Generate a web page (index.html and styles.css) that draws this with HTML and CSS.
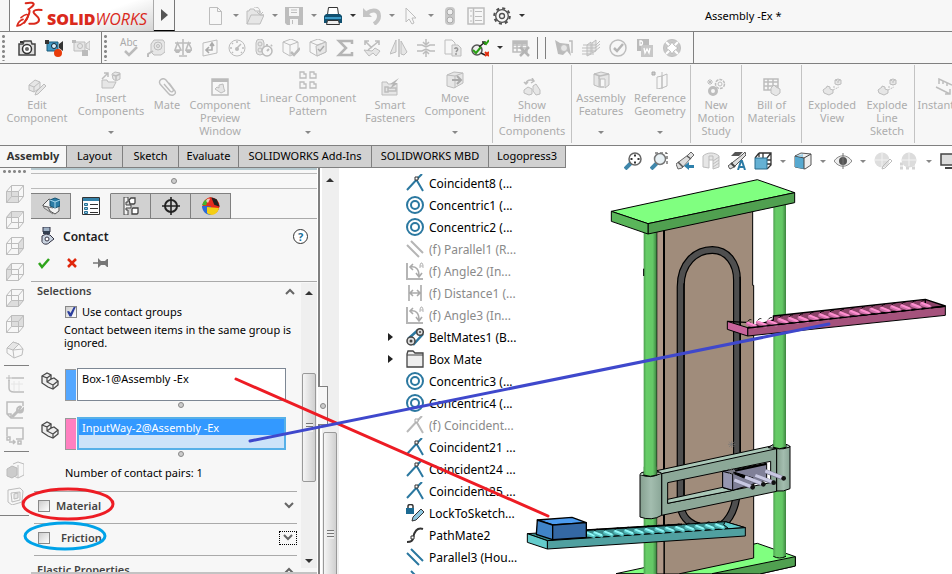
FILE: index.html
```html
<!DOCTYPE html>
<html lang="en">
<head>
<meta charset="utf-8">
<title>Assembly -Ex *</title>
<link rel="stylesheet" href="styles.css">
</head>
<body>
<svg class="defs" aria-hidden="true">
  <symbol id="cube" viewBox="0 0 18 18"><path class="l" d="M.5 6.500h12v11h-12zM.5 6.500l5-6h12v11l-5 6M12.500 6.500l5-6M5.500.5v11h12M5.500 11.500l-5 6"/></symbol>
  <symbol id="part" viewBox="0 0 18 18"><path d="M1 4l5-3 4 2v4l3-1 4 3v4l-5 4-5-2-6-4z" fill="#eee" stroke="#4a4a4a" stroke-width="1.300"/><path d="M1 4l5 2v4l6 3v4M6 6l4-3M6 10l4-3M12 13l5-4" fill="none" stroke="#4a4a4a" stroke-width="1.200"/></symbol>
  <symbol id="coin" viewBox="0 0 18 18"><path d="M1 16L13 3l3-3M10 5l7 12" fill="none" stroke="currentColor" stroke-width="2"/><path d="M9 3h3v3H9z" fill="#fff" stroke="#333"/></symbol>
  <symbol id="coinoff" viewBox="0 0 18 18"><path d="M1 16L13 3l3-3M10 5l7 12" fill="none" stroke="#b9b9b9" stroke-width="2"/><path d="M9 3h3v3H9z" fill="#fff" stroke="#aaa"/></symbol>
  <symbol id="conc" viewBox="0 0 18 18"><circle cx="9" cy="9" r="8" fill="none" stroke="#2b78a0" stroke-width="2"/><circle cx="9" cy="9" r="4" fill="#fff" stroke="#2b78a0" stroke-width="2"/></symbol>
  <symbol id="para" viewBox="0 0 18 18"><path d="M1 5l12 12M5 1l12 12" fill="none" stroke="currentColor" stroke-width="2"/></symbol>
  <symbol id="angle" viewBox="0 0 18 18"><path d="M1 1v16h16" fill="none" stroke="#b5b5b5" stroke-width="2"/><path d="M4 5c6-1 9 2 9 9M7 2L4 5l3 3M10 11l3 4 3-4" fill="none" stroke="#aaa" stroke-width="1.600"/><path d="M14 6V3l1-2h1l1 2v3M14 4h3" fill="none" stroke="#b5b5b5"/></symbol>
  <symbol id="chev" viewBox="0 0 12 8"><path d="M2 1l4 4 4-4" fill="none" stroke="#666" stroke-width="2"/></symbol>
  <symbol id="explode" viewBox="0 0 20 18"><path class="f" d="M1 12l4-3V8l3 1v2l3 1v3l-4 2-5-2zM13 2l3-1 3 1v4l-3 1-3-1z"/><path class="l" d="M13 2l3 1 3-1M16 3v4M12 8v3M11 12l6-3" stroke-dasharray="2 1"/></symbol>
</svg>

<header class="quickbar">
  <div class="logo">
    <svg width="28" height="29" viewBox="0 0 84 87" aria-hidden="true"><g fill="none" stroke="#da291c" stroke-width="6" stroke-linecap="round" stroke-linejoin="round"><path d="M32 7c14-4 26-2 24 4-2 6-8 9-16 14 8 1 2 20-12 40"/><path d="M18 50c14-12 22-12 21-4C37 58 22 72 6 75c3-10 10-18 18-20" stroke-width="5"/><path d="M80 27c-15-3-26 1-24 8 1 5 15 11 16 20 1 12-15 15-29 13"/></g></svg>
    <span class="logo-a">SOLID</span><span class="logo-b">WORKS</span>
  </div>
  <button class="logo-more" aria-label="Expand menu"></button>
  <div class="qa">
    <button class="ib" aria-label="New"><svg class="i" viewBox="0 0 18 18"><path class="l" fill="#fff" d="M2.500.5h8l4 4v13h-12zM10.500.5v4h4"/></svg></button><i class="caret"></i>
    <button class="ib" aria-label="Open"><svg class="i" viewBox="0 0 18 18"><path class="f" d="M1 17V4h2l1-2h4l1 2h5v4h4l-4 9z"/><path class="l" d="M1 17l4-9h13M8 0c5 0 6 2 6 6M11 5l3 3 3-3"/></svg></button><i class="caret"></i>
    <button class="ib" aria-label="Save"><svg class="i" viewBox="0 0 18 18"><path fill="#bdbdbd" d="M0 0h18v18H2l-2-2z"/><path fill="#f4f4f4" d="M4 1h10v8H4zM5 12h8v6H5z"/><path class="l" d="M6 3h6M6 5.500h6M7.500 13v4"/></svg></button><i class="caret"></i>
    <button class="ib" aria-label="Print"><svg class="i" viewBox="0 0 18 18"><path fill="#fff" stroke="#333" d="M4.500.5h9l1 7h-11z"/><path fill="#11506f" d="M2 7h14l2 2v7H0V9z"/><path fill="#3c9ac6" d="M1 10h16v2H1z"/><path fill="#eee" stroke="#333" d="M3.500 13.500h11l1 4h-13z"/></svg></button><i class="caret dark"></i>
    <button class="ib" aria-label="Undo"><svg class="i" viewBox="0 0 18 18"><path d="M4 6c7-5 12-2 12 3 0 4-2 6-5 8" fill="none" stroke="#c4c4c4" stroke-width="4"/><path fill="#c4c4c4" d="M0 1v9h9z"/></svg></button><i class="caret"></i>
    <button class="ib" aria-label="Select"><svg class="i" viewBox="0 0 18 18"><path class="l" fill="#fff" d="M4 1v14l3-3 3 5 2-1-2-5h4z"/></svg></button><i class="caret"></i>
    <button class="ib" aria-label="Rebuild"><svg class="i" viewBox="0 0 18 18"><rect x="4" y="0" width="10" height="18" rx="4" fill="#c8c8c8"/><circle cx="9" cy="5" r="3" fill="#eee" stroke="#aaa"/><circle cx="9" cy="13" r="3" fill="#eee" stroke="#aaa"/></svg></button>
    <button class="ib gap" aria-label="File properties"><svg class="i" viewBox="0 0 18 18"><path class="l" stroke-width="1.500" d="M1 1h16v16H1zM6.500 1v16"/><path class="l" d="M3 4h2M3 9h2M3 14h2M8 4.500h7M8 9.500h7M8 13.500h7"/></svg></button>
    <button class="ib gap" aria-label="Options"><svg class="i" viewBox="0 0 18 18"><g fill="none" stroke="#505050"><circle cx="9" cy="9" r="7.800" stroke-width="2" stroke-dasharray="3.060 3.060"/><circle cx="9" cy="9" r="6.300" stroke-width="1.300"/><circle cx="9" cy="9" r="2.500" stroke-width="1.300"/></g></svg></button><i class="caret dark"></i>
  </div>
  <h1 class="doc-title">Assembly -Ex *</h1>
</header>

<div class="toolbar" role="toolbar">
  <div class="tb-group rec">
    <i class="grip"></i>
    <button class="tb" aria-label="Capture"><svg class="i" viewBox="0 0 18 18"><path d="M1 5h4l1-3h7l1 3h3v11H1z" fill="#ddd" stroke="#444" stroke-width="1.500"/><circle cx="9" cy="10" r="4.500" fill="#fff" stroke="#333" stroke-width="1.500"/><circle cx="9" cy="10" r="2" fill="#666"/><path d="M2 3h3" stroke="#333" stroke-width="2"/></svg></button>
    <button class="tb" aria-label="Record"><svg class="i" viewBox="0 0 18 18"><path d="M2 3h11v9H2z" fill="#3f97c2" stroke="#1b5a7b"/><path d="M0 1h4v4H0zM14 5l4-3v10l-4-3z" fill="#333"/><circle cx="9" cy="7" r="2.500" fill="#d7eefa" stroke="#123"/><circle cx="13" cy="14" r="4" fill="#e83c0b"/></svg></button>
    <button class="tb" aria-label="Stop"><svg class="i" viewBox="0 0 18 18"><path class="f" d="M2 3h11v9H2zM14 5l4-3v9l-4-2z"/><circle class="l" cx="8" cy="7" r="2.500"/><path fill="#bbb" d="M0 1h4v3H0zM10 11h6v6h-6z"/></svg></button>
  </div>
  <div class="tb-group main-tools">
    <i class="grip"></i>
    <button class="tb" aria-label="Spelling"><span class="abc">Abc</span><svg class="i" viewBox="0 0 18 18"><path d="M5 12l4 4 8-8" fill="none" stroke="#bbb" stroke-width="2.500"/></svg></button>
    <button class="tb" aria-label="Measure"><svg class="i" viewBox="0 0 18 18"><path class="f" d="M4 5l3-4h9l2 3v9l-4 3H7l-3-3z"/><circle class="l" cx="11" cy="7" r="4"/><circle class="l" cx="11" cy="7" r="1.500"/><path class="l" stroke-width="2" d="M6 12l-5 3v3"/></svg></button>
    <button class="tb" aria-label="Mass"><svg class="i" viewBox="0 0 18 18"><path class="l" stroke-width="1.600" d="M9 0v16M1 4h16M5 17h8M3.500 4L1 11h6zM14.500 4L12 11h6z"/><path fill="#bbb" d="M0 11h7l-2 3H2zM11 11h7l-2 3h-3z"/></svg></button>
    <button class="tb" aria-label="Section"><svg class="i" viewBox="0 0 18 18"><path class="l" d="M2 4l14-3v13L2 17z"/><path d="M11 5v6H6M8 8l-3 3 3 3M9 7l2-3 2 3" fill="none" stroke="#aaa" stroke-width="1.600"/></svg></button>
    <button class="tb" aria-label="Sensor"><svg class="i" viewBox="0 0 18 18"><circle class="l" cx="9" cy="9" r="8"/><path class="l" stroke-width="1.500" d="M9 9l4-4M9 2v2M2 9h2M14 9h2M4 4l1 1M4 14l1-1M14 14l-1-1"/><circle cx="9" cy="10" r="2" fill="#bbb"/></svg></button>
    <button class="tb" aria-label="Performance"><svg class="i" viewBox="0 0 18 18"><rect class="f" x="1" y="0" width="8" height="16" rx="4"/><circle class="l" cx="5" cy="5" r="2"/><circle class="l" cx="5" cy="11" r="2"/><circle cx="12" cy="12" r="5" fill="#f7f7f7" stroke="#bbb" stroke-width="1.500"/><path class="l" stroke-width="2" d="M12 5v2M12 12l2-2M17 6l-1 1"/></svg></button>
    <button class="tb" aria-label="Check"><svg class="i" viewBox="0 0 18 18"><path class="l" d="M1 3l8-3 7 3v10l-8 4-7-4zM1 3l7 3 8-3M8 6v10"/><path d="M9 13l3 3 6-7" fill="none" stroke="#bbb" stroke-width="2.500"/></svg></button>
    <button class="tb" aria-label="Geometry check"><svg class="i" viewBox="0 0 18 18"><path class="l" d="M1 3l8-3 8 3v10l-9 4-7-4zM1 3l7 3 9-3"/><path class="f" d="M7 7l10-4v10l-9 4z"/><path d="M9 10l2 2 4-5" fill="none" stroke="#aaa" stroke-width="1.500"/></svg></button>
    <button class="tb" aria-label="Equations"><svg class="i" viewBox="0 0 18 18"><path d="M16 5V2H3l7 7-7 7h13v-3" fill="none" stroke="#b5b5b5" stroke-width="2.500"/></svg></button>
    <button class="tb" aria-label="Deviation"><svg class="i" viewBox="0 0 18 18"><path class="l" stroke-width="1.600" d="M2 2l7 7M16 2L5 11M2 6V2h4M12 2h4v4"/><path class="f" d="M1 11l5 6 4-3 3 3 4-5-5-3-3 3z"/></svg></button>
    <button class="tb" aria-label="Draft"><svg class="i" viewBox="0 0 18 18"><path class="f" d="M0 15L6 1v12zM11 2l6 11-3 3-3-1z"/><path class="l" d="M9 0v18" stroke-width="1.500"/></svg></button>
    <button class="tb" aria-label="Thickness"><svg class="i" viewBox="0 0 18 18"><path class="l" stroke-width="1.500" d="M9 0v5M6 3l3 3 3-3M9 18v-5M6 15l3-3 3 3M0 6h5l4 2 4-2h5M0 12h5l4-2 4 2h5"/></svg></button>
    <button class="tb" aria-label="Compare"><svg class="i" viewBox="0 0 18 18"><path class="l" d="M1 1h7l3 3v11H1z"/><path class="f" d="M8 6h6l3 3v8H8z"/><path d="M10.500 10c1-2 4-1 3 1l-1.500 2M12 14v2" fill="none" stroke="#999" stroke-width="1.500"/></svg></button>
    <button class="tb" aria-label="Active check"><svg class="i" viewBox="0 0 18 18"><circle cx="6" cy="11" r="5" fill="#eee" stroke="#555" stroke-width="1.500"/><path d="M8 8l6-5M10 14l4 2M14 6V3h-3" fill="none" stroke="#222" stroke-width="1.500"/><path d="M2 11l3 3 5-6M13 3l2 2 3-4" fill="none" stroke="#28a012" stroke-width="2"/><path d="M14 13l4 4M18 13l-4 4" stroke="#e02b0c" stroke-width="2"/></svg></button>
    <i class="caret dark tight"></i>
    <button class="tb" aria-label="Design table"><svg class="i" viewBox="0 0 18 18"><path class="l" stroke-width="1.500" d="M1 2h14v11H1zM1 6h14M1 9h14M5 2v11M10 2v11"/><path d="M1 2h14v3H1z" fill="#bbb"/><path d="M8 8l9 9M17 8l-9 9" stroke="#b5b5b5" stroke-width="2.500"/></svg></button>
    <i class="bar"></i><i class="bar"></i>
    <button class="tb" aria-label="Simulation"><svg class="i" viewBox="0 0 18 18"><path fill="#bbb" d="M0 1l5 3 9 1 2 12-4-5-4 4-5-1z"/><circle class="f" cx="9" cy="9" r="3.500"/><path class="l" stroke-width="1.500" d="M14 2h3v12"/></svg></button>
    <button class="tb" aria-label="Flow"><svg class="i" viewBox="0 0 18 18"><path class="f" d="M5 6l4-3v12l-4 2zM10 4l4-3v11l-4 2z"/><path class="l" d="M0 9h13l5-4M0 12h13l5-4M1 6h13l4-4M0 15h12"/></svg></button>
    <button class="tb" aria-label="Validate"><svg class="i" viewBox="0 0 18 18"><circle class="l" cx="9" cy="9" r="8" stroke-width="1.500"/><path d="M5 9l3 3 6-7" fill="none" stroke="#b5b5b5" stroke-width="2.500"/></svg></button>
    <button class="tb" aria-label="DriveWorks"><svg class="i" viewBox="0 0 18 18"><path fill="#bbb" d="M1 0h12v12H1z"/><path fill="#c8c8c8" d="M5 6h12v12H5z"/><path d="M4 2v4h1c2 0 2-4 0-4zM8 9l1 5 2-4 2 4 1-5" fill="none" stroke="#fff" stroke-width="1.300"/></svg></button>
    <button class="tb" aria-label="Sustainability"><svg class="i" viewBox="0 0 18 18"><circle cx="9" cy="9" r="6.500" fill="none" stroke="#c8c8c8" stroke-width="4"/><circle class="l" cx="9" cy="9" r="8.500"/><path fill="#fff" stroke="#bbb" d="M9 3l2 3 4 3-4 3-2 3-2-3-4-3 4-3z"/><path d="M3 3l3 3M15 3l-3 3M3 15l3-3M15 15l-3-3" stroke="#fff" stroke-width="2"/></svg></button>
  </div>
</div>

<div class="ribbon">
  <button class="rb w74"><svg class="ri" viewBox="0 0 18 18"><path class="f" d="M1 7l6-5 5 2v6l-6 4-5-2z"/><path class="l" d="M1 7l5 2 6-5M6 9v5"/><path class="f" d="M16 6l2 2-8 8-3 1 1-3z"/></svg><span>Edit<br>Component</span></button>
  <button class="rb up w74"><svg class="ri" viewBox="0 0 20 18"><path class="f" d="M1 17V9h5l1 2h8l-3 6zM11 3l3-2 5 1v6l-4 2-3-2z"/><path class="l" stroke-width="1.500" d="M1 8l6-6M3 2h4v4M12 4l3 1v4M15 5l4-2"/></svg><span>Insert<br>Components</span><i class="caret"></i></button>
  <button class="rb w38"><svg class="ri" viewBox="0 0 18 18"><path class="l" stroke-width="1.400" d="M6 6l6 7c2 2 4 0 3-2L8 2C5-1 0 2 2 6l8 9c3 4 9 2 7-2L11 5"/></svg><span>Mate</span></button>
  <button class="rb w68"><svg class="ri" viewBox="0 0 18 18"><path class="l" d="M1 1h16v16H1z" stroke-width="1.500"/><path fill="#bbb" d="M1 1h16v3H1z"/><path class="f" d="M4 11l2-2 2 1V7l4-1 1 5 1 2-4 2z"/></svg><span>Component<br>Preview<br>Window</span></button>
  <button class="rb up w108"><svg class="ri" viewBox="0 0 18 18"><path class="l" stroke-width="1.300" d="M1 1h4v2h2v4H1zM11 1h4v2h2v4h-6zM1 11h4v2h2v4H1zM11 11h4v2h2v4h-6z"/></svg><span>Linear Component<br>Pattern</span><i class="caret"></i></button>
  <button class="rb w56"><svg class="ri" viewBox="0 0 18 18"><path class="f" d="M1 17V4h5l1 2h9v11z"/><path class="l" stroke-width="1.500" d="M4 9h3v5H4zM7 10h8v3H7z"/><path fill="#b5b5b5" d="M18 0L9 6h3l-3 5 8-6h-3z"/></svg><span>Smart<br>Fasteners</span></button>
  <button class="rb up w74"><svg class="ri" viewBox="0 0 18 18"><path class="f" d="M1 4l7-3 9 1v10l-9 5-7-2z"/><path class="l" d="M1 4l8 1 8-3M9 5v12"/><path d="M6 9h8M11 5l4 4-4 4" fill="none" stroke="#aaa" stroke-width="2"/></svg><span>Move<br>Component</span><i class="caret"></i></button>
  <i class="rsep"></i>
  <button class="rb w78"><svg class="ri" viewBox="0 0 18 18"><path class="l" stroke-width="1.500" d="M3 6c0-4 5-5 8-3M9 0l2 3-3 2M1 4l2 2 2-2"/><path class="f" d="M1 12l4-3 4 2v5l-3 1-5-2zM10 8l3-2 4 6v4l-4 1-3-4z"/></svg><span>Show<br>Hidden<br>Components</span></button>
  <i class="rsep"></i>
  <button class="rb up w58"><svg class="ri" viewBox="0 0 18 18"><path class="f" d="M2 3l7-2 8 2v11l-4 3V8H7v8l-5-2z"/><path class="l" stroke-width="1.500" d="M2 3l6 2 9-2M7 8V5M8 8v8h4"/></svg><span>Assembly<br>Features</span><i class="caret"></i></button>
  <button class="rb up w60"><svg class="ri" viewBox="0 0 18 18"><path class="l" d="M6 6l5-1v12l-5 1zM11 5l5-2v12l-5 2M11 1v17"/><path fill="#ccc" stroke="#aaa" d="M1 1h3v3H1z"/></svg><span>Reference<br>Geometry</span><i class="caret"></i></button>
  <i class="rsep"></i>
  <button class="rb w50"><svg class="ri" viewBox="0 0 18 18"><g class="l"><circle cx="13" cy="6" r="4.500" stroke-width="1.500" stroke-dasharray="3 1"/><circle cx="13" cy="6" r="2"/><circle cx="6" cy="13" r="3.500" stroke-width="3"/><path d="M3 1v6M0 4h6M1 2l4 4M5 2L1 6"/></g></svg><span>New<br>Motion<br>Study</span></button>
  <i class="rsep"></i>
  <button class="rb w59"><svg class="ri" viewBox="0 0 18 18"><path class="l" stroke-width="1.500" d="M1 1h14v11H1zM1 4h14M1 8h14M5 1v11M10 1v11"/><path class="f" d="M8 10l3-3 2 2 4 2v4l-4 3-5-3z"/></svg><span>Bill of<br>Materials</span></button>
  <i class="rsep"></i>
  <button class="rb w60"><svg class="ri"><use href="#explode"/></svg><span>Exploded<br>View</span></button>
  <button class="rb w50"><svg class="ri"><use href="#explode"/></svg><span>Explode<br>Line<br>Sketch</span></button>
  <i class="rsep last-sep"></i>
  <button class="rb w56"><svg class="ri" viewBox="0 0 18 18"><path class="l" stroke-width="1.500" d="M5 6V1l13 6M9 3v3M13 5v3M2 9l14 7M16 11v5h-5"/></svg><span>Instant3D</span></button>
</div>

<div class="tabrow">
  <nav class="tabs">
    <a class="tab on" href="#">Assembly</a><a class="tab t56" href="#">Layout</a><a class="tab t56" href="#">Sketch</a><a class="tab t60" href="#">Evaluate</a><a class="tab t133" href="#">SOLIDWORKS Add-Ins</a><a class="tab t117" href="#">SOLIDWORKS MBD</a><a class="tab t77" href="#">Logopress3</a>
  </nav>
  <div class="headsup">
    <button class="hb" aria-label="Zoom to fit"><svg class="i" viewBox="0 0 18 18"><path d="M1 17l7-7" stroke="#3f87ab" stroke-width="4"/><circle cx="11" cy="7" r="6" fill="#fff" stroke="#666" stroke-width="1.500"/><path d="M11 2.500v2M11 9.500v2M6.500 7h2M13.500 7h2" stroke="#333" stroke-width="2"/></svg></button>
    <button class="hb" aria-label="Zoom to area"><svg class="i" viewBox="0 0 18 18"><path d="M1 17l7-7" stroke="#3f87ab" stroke-width="4"/><path d="M5 1h12v12" fill="none" stroke="#333" stroke-dasharray="3 2"/><circle cx="10" cy="7" r="5.500" fill="#e8f1f5" stroke="#777" stroke-width="1.500"/></svg></button>
    <button class="hb" aria-label="Previous view"><svg class="i" viewBox="0 0 18 18"><path d="M0 12L12 3l3-3 3 3-3 3-9 10-4 1z" fill="#ddd" stroke="#666"/><path d="M2 10l5 5M11 4l4 3" stroke="#555" stroke-width="1.500"/><path d="M8 14l5-4v3h5v3h-5v2z" fill="#2f81ac"/></svg></button>
    <button class="hb" aria-label="Section view"><svg class="i" viewBox="0 0 18 18"><path class="f" d="M1 4c4-4 12-4 16 0v11l-6 2V8H7v8l-6-1z"/><path class="l" d="M11 9l6-4M11 12l6-4M11 15l6-4M7 8V4h4v4"/></svg></button>
    <button class="hb" aria-label="Annotation views"><svg class="i" viewBox="0 0 18 18"><path d="M3 4l4-4h8l-4 4z" fill="#555"/><path d="M0 14L14 3l3-3 1 3L6 15l-4 2z" fill="#ddd" stroke="#555"/><path d="M3 11l4 4" stroke="#444" stroke-width="2"/><path d="M10 18l3-9h1l3 9M11 15h5" fill="none" stroke="#2c7ba5" stroke-width="2"/></svg></button>
    <button class="hb" aria-label="View orientation"><svg class="i" viewBox="0 0 18 18"><path d="M5 1h12v12l-4 4M5 1L1 6M17 1l-4 5M9 1v5M17 8h-4M5 1v4M13 12h4" fill="none" stroke="#333" stroke-width="1.300"/><path d="M1 6h12v11H1z" fill="#65b1d4" stroke="#286a8b"/></svg></button><i class="caret h"></i>
    <button class="hb" aria-label="Display style"><svg class="i" viewBox="0 0 18 18"><path d="M1 4l6-3 10 1v11l-6 4-10-2z" fill="#eee" stroke="#555"/><path d="M1 4l9 2v11l-9-2z" fill="#57a9d0"/><path d="M1 4l9 2 7-4M10 6v11" fill="none" stroke="#444"/><path d="M2 4l7-2v3z" fill="#9cd0e8"/></svg></button><i class="caret h"></i>
    <button class="hb" aria-label="Hide or show"><svg class="i" viewBox="0 0 18 18"><path d="M0 9c5-7 13-7 18 0-5 7-13 7-18 0z" fill="#eee" stroke="#888"/><circle cx="9" cy="9" r="4" fill="#555"/><path d="M9 1v16" stroke="#777"/></svg></button><i class="caret h"></i>
    <button class="hb" aria-label="Edit appearance"><svg class="i" viewBox="0 0 18 18"><circle cx="8" cy="8" r="7.500" fill="#dedede"/><path d="M8 1v14M1 8h14" stroke="#f2f2f2"/><path class="l" fill="#fff" d="M16 7l2 2-7 7-3 1 1-3z"/></svg></button>
    <button class="hb" aria-label="Apply scene"><svg class="i" viewBox="0 0 18 18"><path d="M0 12h18M0 16h18" stroke="#d4d4d4" stroke-width="3" stroke-dasharray="3 3"/><circle cx="9" cy="8" r="7.500" fill="#dcdcdc"/><path d="M9 1v13M2 8h14" stroke="#f2f2f2"/></svg></button><i class="caret h"></i>
    <button class="hb" aria-label="View settings"><svg class="i" viewBox="0 0 18 18"><path d="M1 2h16v11H1z" fill="#ddd" stroke="#444" stroke-width="1.500"/><path d="M5 16h8" stroke="#444" stroke-width="2"/></svg></button>
  </div>
</div>

<main class="work">
  <aside class="strip">
    <i class="grip-h"></i>
    <button class="sb" aria-label="Front"><svg class="i" viewBox="0 0 18 18"><path fill="#ddd" d="M0 6h13v12H0z"/><use href="#cube"/></svg></button>
    <button class="sb" aria-label="Back"><svg class="i" viewBox="0 0 18 18"><path fill="#ddd" d="M0 6l5-6h12l-5 6z"/><use href="#cube"/></svg></button>
    <button class="sb" aria-label="Left"><svg class="i" viewBox="0 0 18 18"><path fill="#ddd" d="M12 6l5-6v12l-5 6z"/><use href="#cube"/></svg></button>
    <button class="sb" aria-label="Right"><svg class="i" viewBox="0 0 18 18"><path fill="#ddd" d="M0 6l5-6v12l-5 6z"/><use href="#cube"/></svg></button>
    <button class="sb" aria-label="Top"><svg class="i" viewBox="0 0 18 18"><path fill="#ddd" d="M0 18l5-6h12l-5 6z"/><use href="#cube"/></svg></button>
    <button class="sb" aria-label="Bottom"><svg class="i" viewBox="0 0 18 18"><path fill="#ddd" d="M6 1h12v11H6z"/><use href="#cube"/></svg></button>
    <button class="sb" aria-label="Isometric"><svg class="i" viewBox="0 0 18 18"><path class="l" d="M1 7l6-6 6 2 4 5-1 6-8 3-7-5z"/><path class="f" d="M1 7l6-6 6 2-6 6z"/><path class="l" d="M7 9l1 8M7 9l10-1"/></svg></button>
    <i class="ssep"></i>
    <button class="sb" aria-label="Sketch"><svg class="i" viewBox="0 0 18 18"><path d="M3 5v8c0 3 2 4 5 4h10M6 3h12" class="l" stroke-width="1.500"/><path d="M3 0v6M0 3h6" stroke="#bbb"/><path d="M8 6v10M13 6v10M5 9h12" stroke="#e6e6e6"/></svg></button>
    <button class="sb" aria-label="Tools"><svg class="i" viewBox="0 0 18 18"><path class="l" stroke-width="1.500" d="M17 5V1H1v12l4 4h12M5 17v-4H1"/><path class="l" stroke-width="3" d="M6 16l6-6"/><path class="l" stroke-width="2" d="M17 8c0 5-6 4-6 1s3-4 4-3l-2 3 2 1z"/></svg></button>
    <button class="sb" aria-label="Layout"><svg class="i" viewBox="0 0 18 18"><path class="l" stroke-width="1.500" d="M1 9V1h16v11h-7M1 10h3v3H1zM12 14h3v3h-3zM3 15h6M7 13l2 2-2 2"/></svg></button>
    <i class="ssep"></i>
    <button class="sb" aria-label="Component"><svg class="i" viewBox="0 0 18 18"><path class="l" d="M7 3l5-2 6 2v11l-6 3-4-2"/><path fill="#ccc" stroke="#bbb" d="M1 8l5-3 5 2v7l-5 3-5-2z"/><path class="l" d="M12 4v13"/></svg></button>
    <button class="sb" aria-label="Cavity"><svg class="i" viewBox="0 0 18 18"><path class="l" d="M2 3l12-2 3 3-1 11-10 3-4-3zM5 6l9-1v8l-8 2z"/><path class="f" d="M8 7l4-1v5l-4 1z"/></svg></button>
    <i class="ssep end"></i>
  </aside>

  <section class="panel">
    <div class="pull"><i class="dot"></i></div>
    <div class="ptabs">
      <button class="pt" aria-label="Features"><svg class="i" viewBox="0 0 18 18"><path d="M1 8l6-6 4 2 6 5v5l-4 3-5-3-2-4-5-1z" fill="#f2f2f2" stroke="#555"/><path d="M1 8l1 3 9 6M6 10l5 1" fill="none" stroke="#777"/><path d="M8 3l5-2 5 2v6l-5 2-5-2z" fill="#2c7da6" stroke="#16516f"/><path d="M8 3l5 2 5-2M13 5v6" fill="none" stroke="#a8d7ec"/></svg></button>
      <button class="pt on" aria-label="Properties"><svg class="i" viewBox="0 0 18 18"><path d="M.5.500h17v17H.5z" fill="#fff" stroke="#333"/><path d="M1 1h16v3H1z" fill="#3482a9"/><path d="M8 7.500h8M8 11.500h8M8 15.500h8" stroke="#333"/><path d="M2.500 6.500h3v2h-3zM2.500 10.500h3v2h-3zM2.500 14.500h3v2h-3z" fill="#8ecbe5" stroke="#276f93"/></svg></button>
      <button class="pt" aria-label="Configurations"><svg class="i" viewBox="0 0 18 18"><path d="M2 0h4v5H4v3h5v3H4v2h2v5H2z" fill="#f2f2f2" stroke="#444"/><path d="M7 3l2-2h4v5l-1 1H8zM10 12l1-1h5v5l-1 1h-5z" fill="#fff" stroke="#444" stroke-width="1.300"/></svg></button>
      <button class="pt" aria-label="Dimensions"><svg class="i" viewBox="0 0 18 18"><circle cx="9" cy="9" r="6" fill="none" stroke="#222" stroke-width="2"/><path d="M9 0v18M0 9h18" stroke="#222" stroke-width="1.600"/></svg></button>
      <button class="pt" aria-label="Appearances"><svg class="i" viewBox="0 0 18 18"><circle cx="9" cy="9" r="8.500" fill="#e82a1a"/><path d="M0 9h9v9C4 18 0 14 0 9z" fill="#2b6bd8"/><path d="M2 4l7-4v9L0 8z" fill="#42b52c"/><path d="M5 10l12 1c-2 8-9 8-12 5z" fill="#f4ce13"/><path d="M9 0l3 10-8-1 2-8z" fill="#e52c20"/><path d="M11 2l3 1 2 5-3-1z" fill="#222" stroke="#222" stroke-width="2"/><path d="M4 4c1-3 4-3 4-2L6 6z" fill="#fff" opacity=".7"/></svg></button>
    </div>
    <div class="ptitle">
      <svg class="i" viewBox="0 0 18 18" aria-hidden="true"><path d="M5 0h7v5H5z" fill="#9eb0c4" stroke="#334"/><path d="M5 4h7v3H5z" fill="#333f50"/><path d="M4 9l4-2 4 1 4 4-4 3c-3 4-9 2-8-2z" fill="#c9d3df" stroke="#334"/><circle cx="9" cy="12" r="2" fill="#fff" stroke="#334"/></svg>
      <h2>Contact</h2>
      <button class="help" aria-label="Help">?</button>
    </div>
    <div class="pacts">
      <button aria-label="OK"><svg width="14" height="12" viewBox="0 0 14 12"><path d="M2 6l3 4 7-8" fill="none" stroke="#2fa51c" stroke-width="2.500"/></svg></button>
      <button aria-label="Cancel"><svg width="12" height="12" viewBox="0 0 12 12"><path d="M2 2l8 8M10 2l-8 8" stroke="#e0270c" stroke-width="2.500"/></svg></button>
      <button aria-label="Keep visible"><svg width="16" height="12" viewBox="0 0 16 12"><path d="M0 6h7" stroke="#777" stroke-width="1.500"/><path d="M5 1l3 3h4l2-2h1v8h-1l-2-2H8l-3 3z" fill="#777"/></svg></button>
    </div>
    <div class="pbody">
      <div class="pcontent">
        <div class="sechead"><h3>Selections</h3><svg class="chev flip" aria-hidden="true"><use href="#chev"/></svg></div>
        <label class="usegroups"><input type="checkbox" checked>Use contact groups</label>
        <p class="hint">Contact between items in the same group is ignored.</p>
        <div class="sel"><svg class="i"><use href="#part"/></svg><i class="swatch sky"></i><input class="box" aria-label="First selection" value="Box-1@Assembly -Ex" readonly></div>
        <i class="dot mid"></i>
        <div class="sel"><svg class="i"><use href="#part"/></svg><i class="swatch pink"></i><input class="box active" aria-label="Second selection" value="InputWay-2@Assembly -Ex" readonly></div>
        <i class="dot mid"></i>
        <p class="pairs">Number of contact pairs: 1</p>
        <div class="opt"><label><input type="checkbox">Material</label><svg class="chev"><use href="#chev"/></svg></div>
        <div class="opt fr"><label><input type="checkbox">Friction</label><button class="focus" aria-label="Expand friction"><svg class="chev"><use href="#chev"/></svg></button></div>
        <div class="opt last"><h3>Elastic Properties</h3><svg class="chev flip"><use href="#chev"/></svg></div>
      </div>
      <div class="scroll"><i class="up-arrow"></i><i class="thumb"></i><i class="down-arrow"></i></div>
    </div>
  </section>

  <div class="treescroll"><i class="up-arrow"></i><i class="tthumb"></i><span class="splitter"><i class="dot"></i></span></div>

  <ul class="tree">
    <li><svg class="i blue"><use href="#coin"/></svg>Coincident8 (...</li>
    <li><svg class="i"><use href="#conc"/></svg>Concentric1 (...</li>
    <li><svg class="i"><use href="#conc"/></svg>Concentric2 (...</li>
    <li class="off"><svg class="i"><use href="#para"/></svg>(f) Parallel1 (R...</li>
    <li class="off"><svg class="i"><use href="#angle"/></svg>(f) Angle2 (In...</li>
    <li class="off"><svg class="i" viewBox="0 0 18 18"><path d="M3 1v16M15 1v16M4 9h10M7 6L4 9l3 3M11 6l3 3-3 3" fill="none" stroke="#aaa" stroke-width="1.600"/></svg>(f) Distance1 (...</li>
    <li class="off"><svg class="i"><use href="#angle"/></svg>(f) Angle3 (In...</li>
    <li class="has"><svg class="i" viewBox="0 0 18 18"><path d="M2 11L12 2M7 17L17 6" stroke="#2b78a0" stroke-width="2.500"/><circle cx="5" cy="13" r="4" fill="#ddd" stroke="#444" stroke-width="1.500"/><circle cx="5" cy="13" r="1.500" fill="#444"/><circle cx="14" cy="4" r="3.300" fill="#ddd" stroke="#444" stroke-width="1.500"/><circle cx="14" cy="4" r="1" fill="#444"/></svg>BeltMates1 (B...</li>
    <li class="has"><svg class="i" viewBox="0 0 18 18"><path d="M1 4l1-3h5l2 2h8v14H1z" fill="#eee" stroke="#444" stroke-width="1.300"/><path d="M1 5h16" stroke="#444"/></svg>Box Mate</li>
    <li><svg class="i"><use href="#conc"/></svg>Concentric3 (...</li>
    <li><svg class="i"><use href="#conc"/></svg>Concentric4 (...</li>
    <li class="off"><svg class="i"><use href="#coinoff"/></svg>(f) Coincident...</li>
    <li><svg class="i blue"><use href="#coin"/></svg>Coincident21 ...</li>
    <li><svg class="i blue"><use href="#coin"/></svg>Coincident24 ...</li>
    <li><svg class="i blue"><use href="#coin"/></svg>Coincident25 ...</li>
    <li><svg class="i" viewBox="0 0 18 18"><path d="M2 5V2c0-2 5-2 5 0v3" fill="none" stroke="#333" stroke-width="1.500"/><path d="M0 4h8v6H0z" fill="#1c6a92"/><path d="M15 5l3 3-8 8-4 1 1-4z" fill="#8fc7e0" stroke="#333"/></svg>LockToSketch...</li>
    <li><svg class="i" viewBox="0 0 18 18"><path d="M1 16c4 0 6-1 6-4 1-6 4-11 10-9" fill="none" stroke="#333" stroke-width="2"/><path d="M5 10h3v3H5z" fill="#fff" stroke="#333"/></svg>PathMate2</li>
    <li><svg class="i blue"><use href="#para"/></svg>Parallel3 (Hou...</li>
    <li><svg class="i blue"><use href="#para"/></svg></li>
  </ul>

  <!-- Assembly model, drawn at three units per pixel -->
  <svg class="scene" viewBox="0 -6 1296 1218" preserveAspectRatio="xMinYMin meet" role="img" aria-label="Assembly model">
    <defs>
      <linearGradient id="post"><stop offset="0" stop-color="#4c9f4f"/><stop offset=".2" stop-color="#66cc66"/><stop offset=".7" stop-color="#64c866"/><stop offset="1" stop-color="#3d8440"/></linearGradient>
      <linearGradient id="slv"><stop offset="0" stop-color="#85a08f"/><stop offset=".5" stop-color="#a3bdaf"/><stop offset="1" stop-color="#8aa697"/></linearGradient>
      <g id="pinkroll"><path d="M0 0l24 9" stroke="#d070aa" stroke-width="11" stroke-linecap="round"/><path d="M1-3l22 9" stroke="#ff8fd0" stroke-width="6" stroke-linecap="round"/><path d="M0-7c4-5 8-6 11-5" fill="none" stroke="#000" stroke-width="3"/></g>
      <g id="tealroll"><path d="M0 0l22 8" stroke="#54bdbd" stroke-width="10" stroke-linecap="round"/><path d="M1-3l20 8" stroke="#8ff7f7" stroke-width="6" stroke-linecap="round"/><path d="M0-7c4-5 8-6 11-5" fill="none" stroke="#000" stroke-width="3"/></g>
      <g id="pin"><path d="M0 0l54 21" stroke="#77778e" stroke-width="13"/><path d="M0-1l54 21" stroke="#c8c8e2" stroke-width="9"/><circle cx="55" cy="21" r="7" fill="#111"/></g>
    </defs>
    <g stroke="#000" stroke-width="3" stroke-linejoin="round">
      <path d="M288 1211l424-91 114 40v28l-107 24z" fill="#80ff80"/>
      <path d="M576 1211l250-51v28l-107 24z" fill="#50a050"/>
      <path d="M410 180l288-56v222h3v818l-226 48h-65z" fill="#a08c7b"/>
      <path d="M410 180l22-3v1035h-22z" fill="#b09888"/>
      <path d="M432 180v936" stroke-width="6"/><path d="M433 1116v96M410 180v380"/>
      <path d="M482 1000V350c0-70 45-110 95-110 45 0 74 40 74 90v620c0 75-35 125-75 125-60 0-94-30-94-75z" fill="none" stroke-width="24"/>
      <path d="M482 1000V350c0-70 45-110 95-110 45 0 74 40 74 90v620c0 75-35 125-75 125-60 0-94-30-94-75z" fill="none" stroke="#4f4f4f" stroke-width="17"/>
      <path d="M492 340v660M660 320v530" stroke-width="4"/>
    </g>
    <path d="M371 185h39v1027h-39z" fill="url(#post)"/>
    <path d="M760 100h38v1060q-19 7-38 0z" fill="url(#post)"/>
    <path d="M760 1159q19 10 38 0" fill="none" stroke="#000" stroke-width="3"/>
    <path d="M371 296v22" stroke="#000" stroke-width="3"/>
    <g stroke="#000" stroke-width="3" stroke-linejoin="round">
      <path d="M274 124l438-95 112 39-440 93z" fill="#80ff80"/>
      <path d="M384 161l440-93v30l-440 94z" fill="#50a050"/>
      <path d="M274 124l110 37v31l-110-38z" fill="#5ab55a"/>
      <path d="M683 473l593-64v27L683 498z" fill="#a5527c"/>
      <path d="M760 450v-12l456-50 60 20-593 65z" fill="#8d4369" stroke-width="4"/>
      <path d="M622 454l61 19v25l-61-20z" fill="#c8649c"/>
      <path d="M622 454l70 4M1216 388v14" stroke-width="4"/>
    </g>
    <g fill="none">
      <use href="#pinkroll" x="683" y="461"/><use href="#pinkroll" x="713" y="458"/><use href="#pinkroll" x="745" y="455"/><use href="#pinkroll" x="777" y="450"/><use href="#pinkroll" x="808" y="447"/><use href="#pinkroll" x="838" y="444"/><use href="#pinkroll" x="869" y="440"/><use href="#pinkroll" x="900" y="436"/><use href="#pinkroll" x="930" y="433"/><use href="#pinkroll" x="961" y="430"/><use href="#pinkroll" x="992" y="426"/><use href="#pinkroll" x="1023" y="423"/><use href="#pinkroll" x="1053" y="419"/><use href="#pinkroll" x="1084" y="416"/><use href="#pinkroll" x="1115" y="412"/><use href="#pinkroll" x="1145" y="409"/><use href="#pinkroll" x="1176" y="405"/><use href="#pinkroll" x="1205" y="402"/>
      <path d="M683 474l593-65" stroke="#000" stroke-width="4"/>
    </g>
    <g stroke="#000" stroke-width="3" stroke-linejoin="round">
      <path d="M410 902l358-77v32l-343 54z" fill="#aac8b8"/>
      <path fill-rule="evenodd" d="M425 911l345-75v128l-345 72zM443 938v62l309-62v-64z" fill="#8ca898"/>
      <path d="M443 988l165-36 32 9-197 39z" fill="#aac8b8"/>
      <path d="M360 914q30 12 65-4v126q-30 18-65 5z" fill="url(#slv)"/>
      <path d="M360 914q2-8 12-8v10q20 8 38 0v-10q12 0 15 4" fill="#b4cfc0"/>
      <path d="M770 836q20 0 40-8v128q-20 10-40 7z" fill="url(#slv)"/>
      <path d="M745 833l15-10v10q20 6 38 0v-10q10 2 12 8-20 8-40 5z" fill="#b4cfc0"/>
      <path d="M608 904l132-24v50l-102 31-30-8z" fill="#808098"/>
      <path d="M608 904l30 8v49l-30-9z" fill="#9696b0"/>
      <path d="M645 902l94-20" stroke-width="6"/><path d="M640 906l60 18v12l-60-26"/>
    </g>
    <path d="M371 890h39v25q-19 8-39 0z" fill="url(#post)"/>
    <path d="M760 810h38v22q-19 8-38 0z" fill="url(#post)"/>
    <path d="M371 915q20 8 39 0M760 832q19 8 38 0" fill="none" stroke="#000" stroke-width="3"/>
    <use href="#pin" x="675" y="922"/><use href="#pin" x="643" y="931"/><use href="#pin" x="706" y="917"/><use href="#pin" x="736" y="904"/>
    <path d="M624 823h22M635 812v22M627 815l16 16M643 815l-16 16M624 903h22M635 893v22M627 896l16 16M643 896l-16 16" stroke="#777" stroke-width="2"/>
    <g stroke="#000" stroke-width="3" stroke-linejoin="round">
      <path d="M200 1080l286-17 130-8 60 18-594 39-60-21z" fill="#388888"/>
      <path d="M616 1055l60 18-50 3-15-12z" fill="#64cccc"/>
      <path d="M82 1112l594-39v25l-594 39z" fill="#50a0a0"/>
      <path d="M22 1091l60 21v25l-60-20z" fill="#64cccc"/>
      <path d="M200 1080l286-17" stroke-width="5"/>
    </g>
    <g fill="none">
      <use href="#tealroll" x="200" y="1091"/><use href="#tealroll" x="223" y="1090"/><use href="#tealroll" x="254" y="1088"/><use href="#tealroll" x="285" y="1086"/><use href="#tealroll" x="316" y="1084"/><use href="#tealroll" x="346" y="1082"/><use href="#tealroll" x="377" y="1080"/><use href="#tealroll" x="408" y="1078"/><use href="#tealroll" x="438" y="1076"/><use href="#tealroll" x="468" y="1074"/><use href="#tealroll" x="498" y="1072"/><use href="#tealroll" x="528" y="1070"/><use href="#tealroll" x="558" y="1068"/><use href="#tealroll" x="588" y="1066"/>
    </g>
    <g stroke="#000" stroke-width="4" stroke-linejoin="round">
      <path d="M52 1050l104-8 43 16-101 7z" fill="#4c9cf0"/>
      <path d="M52 1050l46 15v44l-49-16z" fill="#4084c8"/>
      <path d="M98 1065l101-7v44l-101 7z" fill="#3468a4"/>
    </g>
  </svg>
</main>

<!-- Callouts linking the selections to the model -->
<svg class="callouts" viewBox="0 0 952 574" aria-hidden="true">
  <g fill="none" stroke-width="3" stroke-linecap="round">
    <path d="M236 379l312 137" stroke="#ed1c24"/>
    <path d="M250 441l579-117" stroke="#3f48cc"/>
    <ellipse cx="68" cy="504" rx="45" ry="15" stroke="#ed1c24"/>
    <ellipse cx="65" cy="536" rx="40" ry="13" stroke="#00a2e8"/>
  </g>
</svg>
</body>
</html>
```
FILE: styles.css
```css
* { box-sizing: border-box; }
body {
  margin: 0;
  height: 100vh;
  overflow: hidden;
  display: flex;
  flex-direction: column;
  position: relative;
  background: #f7f7f7;
  color: #000;
  font: 11px/13px "Noto Sans", "Open Sans", sans-serif;
}
button {
  margin: 0;
  padding: 0;
  border: 0;
  background: none;
  font: inherit;
  color: inherit;
}
h1, h2, h3, p, ul { margin: 0; padding: 0; font: inherit; }
.defs { position: absolute; width: 0; height: 0; }
.i { width: 18px; height: 18px; display: block; flex: none; }
.l { stroke: #bdbdbd; fill: none; }
.f { stroke: #bdbdbd; fill: #e6e6e6; }

.caret { flex: none; width: 19px; display: flex; justify-content: center; color: #888; }
.caret::before {
  content: "";
  border: 3px solid transparent;
  border-top-color: currentColor;
  border-bottom: 0;
}
.caret.dark { color: #333; }
.caret.tight { width: 14px; }
.caret.h { width: 14px; }

/* title bar */
.quickbar { flex: none; height: 32px; display: flex; align-items: center; border-bottom: 1px solid #808080; }
.logo {
  flex: none;
  width: 145px;
  height: 31px;
  margin-left: 9px;
  padding-left: 5px;
  display: flex;
  align-items: center;
  border-left: 1px solid #808080;
  border-right: 1px solid #aaa;
  background: linear-gradient(160deg, #fff 55%, #d4d4d4);
  color: #da291c;
  font: 16px/20px "Open Sans", sans-serif;
}
.logo-a { font-weight: 800; margin-left: 4px; padding-top: 7px; }
.logo-b { font-style: italic; padding-top: 7px; }
.logo-more {
  width: 21px;
  height: 31px;
  border-right: 1px solid #777;
  border-bottom: 1px solid #000;
  display: flex;
  align-items: center;
  justify-content: center;
}
.logo-more::before { content: ""; border: 6px solid transparent; border-left: 7px solid #555; border-right: 0; }
.qa { display: flex; align-items: center; margin-left: 31px; }
.ib { width: 20px; display: flex; justify-content: center; }
.gap { margin-left: 6px; }
.doc-title { margin-left: 174px; white-space: nowrap; }

/* tool bar */
.toolbar { flex: none; height: 32px; display: flex; border-bottom: 1px solid #808080; }
.tb-group { display: flex; align-items: center; border-right: 1px solid #808080; }
.rec { width: 102px; }
.main-tools { padding-right: 8px; }
.grip { width: 3px; height: 27px; margin: 0 8px 0 2px; background: radial-gradient(circle, #888 1px, transparent 2px) 0 0 / 3px 5px; }
.tb { flex: none; width: 27px; display: flex; justify-content: center; position: relative; }
.abc { position: absolute; left: 5px; top: -3px; font-size: 10px; color: #aaa; }
.bar { width: 1px; height: 22px; background: #808080; margin: 0 4px 0 3px; }

/* ribbon */
.ribbon { flex: none; height: 82px; display: flex; border-bottom: 1px solid #808080; overflow: hidden; color: #adadad; }
.rb { flex: none; height: 81px; padding-top: 14px; display: flex; flex-direction: column; align-items: center; justify-content: flex-start; gap: 2px; white-space: nowrap; }
.rb.up { padding-top: 7px; }
.ri { display: block; flex: none; width: 20px; height: 18px; }
.rb .caret { width: auto; padding-top: 12px; }
.rsep { flex: none; width: 1px; height: 78px; margin-top: 1px; background: #c3c3c3; }
.last-sep { margin-left: 2px; }
.w38 { width: 38px; } .w50 { width: 50px; } .w56 { width: 56px; } .w58 { width: 58px; }
.w59 { width: 59px; } .w60 { width: 60px; } .w68 { width: 68px; } .w74 { width: 74px; }
.w78 { width: 78px; } .w108 { width: 108px; }

/* command tabs */
.tabrow { flex: none; height: 22px; display: flex; background: linear-gradient(90deg, #f7f7f7 320px, #fff 320px); }
.tabs { flex: none; display: flex; }
.tab {
  height: 22px;
  line-height: 20px;
  text-align: center;
  white-space: nowrap;
  color: #000;
  text-decoration: none;
  background: #d1d1d1;
  border-right: 1px solid #808080;
  border-bottom: 1px solid #808080;
}
.tab.on { width: 67px; background: #f7f7f7; font-weight: 700; color: #333; }
.t56 { width: 56px; } .t60 { width: 60px; } .t133 { width: 133px; } .t117 { width: 117px; } .t77 { width: 77px; }
.headsup { position: relative; z-index: 1; display: flex; align-items: center; height: 30px; margin-left: 54px; }
.hb { flex: none; width: 26px; display: flex; justify-content: center; }

/* work area */
.work { flex: 1; min-height: 0; display: flex; overflow: hidden; background: #fff; }
.strip { flex: none; width: 31px; background: #f7f7f7; display: flex; flex-direction: column; align-items: flex-start; }
.grip-h { flex: none; width: 26px; height: 3px; margin: 2px 0 8px 2px; background: radial-gradient(circle, #888 1px, transparent 2px) 0 0 / 5px 3px; }
.sb { flex: none; height: 26px; padding-left: 6px; display: flex; align-items: center; }
.ssep { flex: none; width: 25px; height: 1px; margin: 2px 0 5px 4px; background: #808080; }
.ssep.end { width: 29px; margin: 6px 0 0; }

.panel { flex: none; width: 286px; background: #f7f7f7; display: flex; flex-direction: column; border-top: 2px solid #b5c9cf; border-bottom: 2px solid #c3c3c3; }
.pull { flex: none; height: 16px; margin-top: 3px; display: flex; align-items: center; justify-content: center; border-top: 1px solid #bbb; border-bottom: 1px solid #bbb; }
.dot { display: block; flex: none; width: 6px; height: 6px; border: 1px solid #888; border-radius: 50%; background: #ccc; }
.ptabs { flex: none; height: 26px; margin-top: 4px; display: flex; border-bottom: 1px solid #aaa; }
.pt { width: 40px; height: 26px; display: flex; align-items: center; justify-content: center; background: #d1d1d1; border: 1px solid #808080; border-left: 0; }
.pt.on { background: #f7f7f7; border-top-color: #f7f7f7; border-bottom-color: #f7f7f7; }
.ptitle { flex: none; height: 34px; display: flex; align-items: center; padding: 0 9px 0 7px; }
.ptitle h2 { font-size: 12px; font-weight: 600; color: #1c1c1c; margin-left: 7px; flex: 1; }
.help { width: 15px; height: 15px; border: 1px solid #333; border-radius: 50%; color: #1d6f99; font-weight: 700; line-height: 13px; background: #fff; }
.pacts { flex: none; height: 29px; display: flex; gap: 15px; padding: 4px 0 0 6px; border-bottom: 1px solid #aaa; }
.pacts button { height: 12px; display: flex; }
.pbody { flex: 1; min-height: 0; display: flex; overflow: hidden; }
.pcontent { flex: 1; min-width: 0; overflow: hidden; padding-left: 3px; }
.sechead { display: flex; align-items: center; justify-content: space-between; height: 17px; padding: 0 5px 0 3px; }
h3 { font-weight: 600; color: #444; }
.chev { width: 12px; height: 8px; display: block; flex: none; }
.flip { transform: scaleY(-1); }
input[type="checkbox"] {
  appearance: none;
  width: 12px;
  height: 12px;
  margin: 0;
  border: 1px solid #888;
  background: linear-gradient(135deg, #ccc, #fff);
  outline: 0;
  flex: none;
}
input[type="checkbox"]:checked::before {
  content: "";
  display: block;
  width: 10px;
  height: 10px;
  background: #2c3f9e;
  clip-path: polygon(10% 50%, 30% 45%, 45% 65%, 80% 0, 100% 0, 55% 100%, 35% 100%);
}
.usegroups { display: flex; align-items: center; gap: 5px; height: 13px; margin: 6px 0 0 31px; }
.hint { margin: 5px 0 0 30px; }
.sel { display: flex; align-items: center; height: 33px; padding: 0 15px 0 7px; }
.hint + .sel { margin-top: 19px; }
.sel .i { margin-bottom: 8px; }
.swatch { width: 11px; height: 32px; margin: 0 1px 0 6px; border: 1px solid #999; border-width: 1px 0 1px 1px; }
.swatch.sky { background: #54a7ff; }
.swatch.pink { background: #ff80c0; }
.box { flex: 1; min-width: 0; height: 33px; margin: 0; padding: 0 4px 12px; border: 1px solid #7d8794; background: #fff; font: inherit; outline: 0; }
.box.active { border: 2px solid #56b0e8; padding: 0 3px 12px; color: #fff; background: linear-gradient(to bottom, #3399ff 0, #3399ff 16px, #cce3f9 16px, #cce3f9 100%); }
.dot.mid { margin: 1px 0 9px 144px; }
.pairs { margin: 0 0 12px 31px; }
.opt { height: 32px; margin-right: 4px; padding: 0 2px 4px 4px; display: flex; align-items: center; justify-content: space-between; border-top: 1px solid #aaa; font-weight: 600; color: #444; }
.opt label { display: flex; align-items: center; gap: 6px; }
.opt.fr label { gap: 11px; }
.opt.last h3 { margin-left: -1px; }
.focus { width: 18px; height: 14px; margin-right: -2px; border: 1px dotted #000; display: flex; align-items: center; justify-content: center; }
.scroll { flex: none; width: 16px; margin: 1px 0 4px; background: #efefef; display: flex; flex-direction: column; align-items: center; padding: 8px 0 5px; }
.up-arrow { border: 4px solid transparent; border-bottom-color: #333; border-top: 0; }
.down-arrow { border: 4px solid transparent; border-top-color: #333; border-bottom: 0; margin-top: auto; }
.thumb, .tthumb { width: 14px; border: 1px solid #999; border-radius: 2px; background: repeating-linear-gradient(#777 0 1px, #eee 1px 3px) center / 7px 9px no-repeat, linear-gradient(90deg, #f5f5f5, #d0d0d0); }
.thumb { height: 109px; margin-top: 78px; }

.treescroll { flex: none; width: 21px; position: relative; border-left: 2px solid #808080; padding: 10px 2px 0 3px; display: flex; flex-direction: column; align-items: center; background: linear-gradient(90deg, #fff 2px, #efefef 2px); margin-left: 1px; }
.tthumb { flex: none; height: 204px; margin-top: 250px; }
.splitter { position: absolute; left: -2px; top: 218px; width: 10px; height: 39px; background: #f7f7f7; border: 1px solid #808080; border-left: 0; display: flex; align-items: center; justify-content: center; }

.tree { flex: none; width: 181px; padding: 4px 0 0 44px; list-style: none; overflow: hidden; }
.tree li { height: 22px; display: flex; align-items: center; gap: 5px; padding-left: 23px; white-space: nowrap; font-size: 12px; }
.tree .off { color: #8a8a8a; }
.tree .off .i { color: #b5b5b5; }
.tree .blue { color: #2b78a0; }
.tree .has::before { content: ""; border: 4px solid transparent; border-left: 5px solid #222; border-right: 0; }
.tree .has { padding-left: 5px; }
.tree .has .i { margin-left: 8px; }
.scene { flex: 1; min-width: 0; height: 406px; }

.callouts { position: absolute; left: 0; top: 0; width: 952px; height: 574px; pointer-events: none; }
```
